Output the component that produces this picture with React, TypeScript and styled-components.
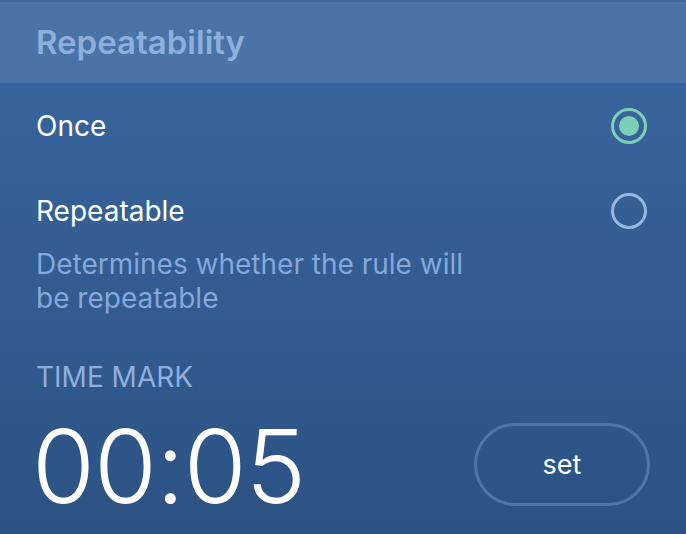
import React from "react";
import styled, { createGlobalStyle } from "styled-components";

const Global = createGlobalStyle`
  html, body { margin: 0; padding: 0; }
  body {
    width: 686px;
    height: 534px;
    overflow: hidden;
    font-family: Inter, "Noto Sans", sans-serif;
    background: #2c5283;
  }
`;

const Screen = styled.div`
  width: 686px;
  height: 534px;
  display: flex;
  flex-direction: column;
  background: linear-gradient(180deg, #3a68a1 0%, #2c5283 100%);
`;

const Header = styled.div`
  height: 83px;
  box-sizing: border-box;
  border-top: 2px solid #3e6a9f;
  background: #4a73a6;
  display: flex;
  align-items: center;
  padding: 0 36px 0 36px;
`;

const Title = styled.h1`
  margin: 0;
  margin-top: -2px;
  font-size: 33px;
  font-weight: 600;
  color: #8eafde;
  letter-spacing: 0;
`;

const Body = styled.div`
  flex: 1;
  display: flex;
  flex-direction: column;
  padding: 0 36px;
`;

const OptionRow = styled.div`
  height: 85px;
  display: flex;
  align-items: center;
  justify-content: space-between;
`;

const OptionLabel = styled.span`
  font-size: 28px;
  font-weight: 400;
  color: #ffffff;
`;

const Radio = styled.span<{ $checked?: boolean }>`
  width: 36px;
  height: 36px;
  margin-right: 3px;
  box-sizing: border-box;
  border-radius: 50%;
  border: 3px solid ${(p) => (p.$checked ? "#7ccfb6" : "#9bb5e1")};
  display: flex;
  align-items: center;
  justify-content: center;
  &::after {
    content: "";
    display: ${(p) => (p.$checked ? "block" : "none")};
    width: 20px;
    height: 20px;
    border-radius: 50%;
    background: #7ccfb6;
  }
`;

const Description = styled.p`
  margin: -6px 0 0 0;
  width: 450px;
  font-size: 28px;
  line-height: 34px;
  color: #85a7da;
`;

const SectionLabel = styled.div`
  margin-top: 47px;
  font-size: 28px;
  line-height: 30px;
  color: #8fafdd;
`;

const TimeRow = styled.div`
  margin-top: 15px;
  display: flex;
  align-items: center;
  justify-content: space-between;
`;

const Time = styled.div`
  font-size: 102px;
  font-weight: 300;
  line-height: 110px;
  color: #ffffff;
  margin-left: -4px;
  margin-top: 4px;
  letter-spacing: -1px;
`;

const SetButton = styled.button`
  width: 176px;
  height: 83px;
  border-radius: 42px;
  border: 3px solid #4d77ab;
  background: transparent;
  color: #ffffff;
  font-family: Inter, "Noto Sans", sans-serif;
  font-size: 27px;
  font-weight: 400;
  display: flex;
  align-items: center;
  justify-content: center;
  padding: 0;
  cursor: pointer;
`;

export default function App() {
  return (
    <>
      <Global />
      <Screen>
        <Header>
          <Title>Repeatability</Title>
        </Header>
        <Body>
          <OptionRow>
            <OptionLabel>Once</OptionLabel>
            <Radio $checked />
          </OptionRow>
          <OptionRow>
            <OptionLabel>Repeatable</OptionLabel>
            <Radio />
          </OptionRow>
          <Description>Determines whether the rule will be repeatable</Description>
          <SectionLabel>TIME MARK</SectionLabel>
          <TimeRow>
            <Time>00:05</Time>
            <SetButton>set</SetButton>
          </TimeRow>
        </Body>
      </Screen>
    </>
  );
}
